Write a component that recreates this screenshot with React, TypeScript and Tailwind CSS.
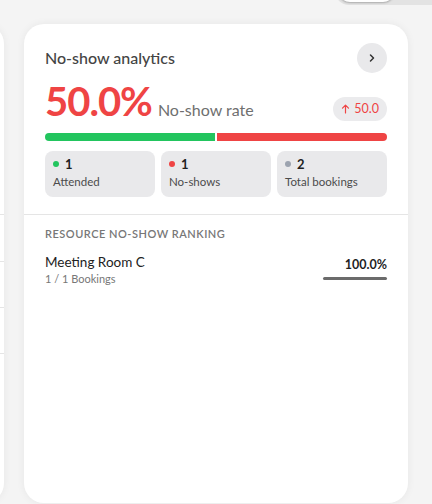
import React from "react";

const font = { fontFamily: '"Lato", "Noto Sans", sans-serif' };

function Stat({ dot, value, label }: { dot: string; value: string; label: string }) {
  return (
    <div className="flex-1 rounded-[8px] bg-[#e9e9eb] px-[8px] pt-[4px] pb-[7px]">
      <div className="flex items-center gap-[6px]">
        <span className={`block w-[6px] h-[6px] rounded-full ${dot}`} />
        <span className="text-[13px] font-bold leading-[18px] text-[#1f1f1f]">{value}</span>
      </div>
      <div className="text-[11.5px] leading-[16px] text-[#4b4b4b] mt-[1px]">{label}</div>
    </div>
  );
}

export default function App() {
  return (
    <div
      className="w-[432px] h-[504px] overflow-hidden bg-[#f4f4f4] flex flex-col"
      style={font}
    >
      {/* header strip: view switcher peeking from above */}
      <div className="h-[24px] flex justify-end">
        <div className="mt-[-30px] h-[35px] w-[97px] rounded-l-[14px] bg-[#e3e3e3] pl-[3px] pt-[3px]">
          <div className="h-[29px] w-[57px] rounded-[12px] bg-white shadow-[0_1px_2px_rgba(0,0,0,0.25)]" />
        </div>
      </div>

      <div className="flex gap-[20px] flex-1 min-h-0">
        {/* neighbouring card, mostly off-screen */}
        <div className="ml-[-196px] w-[200px] h-[479px] rounded-[20px] bg-white shadow-[0_0_8px_rgba(0,0,0,0.06)] flex flex-col">
          <div className="h-[190px]" />
          <div className="border-t border-[#e5e5e5] h-[47px]" />
          <div className="border-t border-[#e5e5e5] h-[46px]" />
          <div className="border-t border-[#e5e5e5] h-[46px]" />
          <div className="border-t border-[#e5e5e5]" />
        </div>

        {/* no-show analytics card */}
        <div className="w-[384px] h-[479px] rounded-[20px] bg-white shadow-[0_0_8px_rgba(0,0,0,0.06)] flex flex-col">
          <div className="px-[21px] pt-[19px]">
            <div className="flex items-center justify-between">
              <h2 className="text-[16px] font-medium text-[#444] leading-[30px]">No-show analytics</h2>
              <button className="w-[30px] h-[30px] rounded-full bg-[#e9e9eb] flex items-center justify-center">
                <svg width="10" height="10" viewBox="0 0 10 10" fill="none">
                  <path d="M3.5 2 L6.5 5 L3.5 8" stroke="#333" strokeWidth="1.5" strokeLinecap="round" strokeLinejoin="round" />
                </svg>
              </button>
            </div>

            <div className="flex items-end justify-between mt-[6px]">
              <div className="flex items-baseline gap-[6px]">
                <span className="text-[40px] font-bold leading-[44px] tracking-[-1px] text-[#ef4444]">50.0%</span>
                <span className="text-[16px] text-[#6f6f6f]">No-show rate</span>
              </div>
              <span className="mb-[2px] h-[24px] px-[8px] rounded-full bg-[#ebebed] text-[12.5px] text-[#ef4444] flex items-center gap-[4px]">
                <svg width="9" height="10" viewBox="0 0 9 10" fill="none">
                  <path d="M4.5 9V1.5M1.5 4.2L4.5 1.2 7.5 4.2" stroke="#ef4444" strokeWidth="1.2" strokeLinecap="round" strokeLinejoin="round" />
                </svg>
                50.0
              </span>
            </div>

            <div className="mt-[10px] flex gap-[2px] h-[8px]">
              <div className="w-[170px] rounded-l-full bg-[#22c55e]" />
              <div className="flex-1 rounded-r-full bg-[#ef4444]" />
            </div>

            <div className="mt-[10px] flex gap-[6px]">
              <Stat dot="bg-[#22c55e]" value="1" label="Attended" />
              <Stat dot="bg-[#ef4444]" value="1" label="No-shows" />
              <Stat dot="bg-[#9ca3af]" value="2" label="Total bookings" />
            </div>
          </div>

          <div className="mt-[17px] border-t border-[#e5e5e5]" />

          <div className="px-[21px] pt-[12px]">
            <div className="text-[11px] font-semibold tracking-[0.5px] text-[#777] uppercase leading-[14px]">
              Resource no-show ranking
            </div>
            <div className="mt-[12px] flex items-start justify-between">
              <div>
                <div className="text-[13.5px] text-[#222] leading-[18px]">Meeting Room C</div>
                <div className="text-[11px] text-[#777] leading-[16px]">1 / 1 Bookings</div>
              </div>
              <div className="w-[64px] pt-[4px] flex flex-col items-end">
                <span className="text-[12.5px] font-bold text-[#1f1f1f] leading-[16px]">100.0%</span>
                <div className="mt-[4px] w-full h-[3px] rounded-full bg-[#6b6b6b]" />
              </div>
            </div>
          </div>
        </div>
      </div>
    </div>
  );
}
